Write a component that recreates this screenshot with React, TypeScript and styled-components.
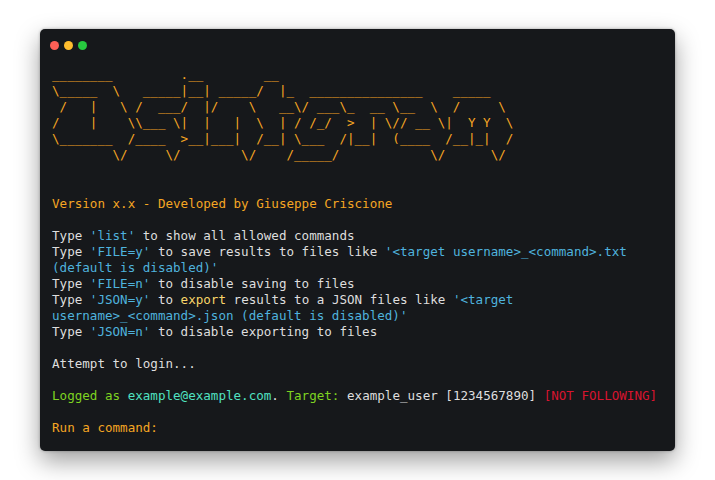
import React from 'react';
import styled, { createGlobalStyle } from 'styled-components';

const colors = {
  orange: '#f5a623',
  blue: '#4fb3de',
  green: '#7ed321',
  teal: '#50e3c2',
  red: '#d8142f',
  yellow: '#f8d568',
  plain: '#dedede',
};

type Tone = keyof typeof colors;

const GlobalStyle = createGlobalStyle`
  html, body {
    margin: 0;
    padding: 0;
    background-color: #fff;
  }
`;

const Page = styled.div`
  width: 715px;
  height: 480px;
  box-sizing: border-box;
  padding: 29px 40px;
  overflow: hidden;
`;

const Terminal = styled.div`
  width: 635px;
  height: 422px;
  box-sizing: border-box;
  background-color: #16181b;
  border-radius: 5px;
  box-shadow: 0 10px 24px rgba(0, 0, 0, 0.38), 0 0 3px rgba(0, 0, 0, 0.3);
  padding: 12px;
`;

const TitleBar = styled.div`
  display: flex;
  gap: 5px;
  height: 9px;
  margin: 0 0 17px -2px;
`;

const Dot = styled.span<{ $color: string }>`
  width: 9px;
  height: 9px;
  border-radius: 50%;
  background-color: ${props => props.$color};
`;

const Output = styled.div`
  font-family: "DejaVu Sans Mono", "Liberation Mono", monospace;
  font-size: 12.57px;
  line-height: 16px;
  white-space: pre-wrap;
`;

const Banner = styled.div`
  margin-bottom: 1px;
`;

const Line = styled.div<{ $tone?: Tone }>`
  min-height: 16px;
  color: ${props => colors[props.$tone || 'plain']};
`;

const Tint = styled.span<{ $tone: Tone }>`
  color: ${props => colors[props.$tone]};
`;

const banner = [
  '________         .__        __',
  '\\_____  \\   _____|__| _____/  |_  _______________    _____',
  ' /   |   \\ /  ___/  |/    \\   __\\/ ___\\_  __ \\__  \\  /     \\',
  '/    |    \\\\___ \\|  |   |  \\  | / /_/  >  | \\// __ \\|  Y Y  \\',
  '\\_______  /____  >__|___|  /__| \\___  /|__|  (____  /__|_|  /',
  '        \\/     \\/        \\/    /_____/            \\/      \\/',
];

const App: React.FC = () => {
  return (
    <Page>
      <GlobalStyle />
      <Terminal>
        <TitleBar>
          <Dot $color="#ff5f56" />
          <Dot $color="#ffbd2e" />
          <Dot $color="#27c93f" />
        </TitleBar>
        <Output>
          <Banner>
            {banner.map(row => (
              <Line key={row} $tone="orange">{row}</Line>
            ))}
          </Banner>
          <Line />
          <Line />
          <Line $tone="orange">Version x.x - Developed by Giuseppe Criscione</Line>
          <Line />
          <Line>Type <Tint $tone="blue">'list'</Tint> to show all allowed commands</Line>
          <Line>
            Type <Tint $tone="blue">'FILE=y'</Tint> to save results to files like{' '}
            <Tint $tone="blue">'&lt;target username&gt;_&lt;command&gt;.txt (default is disabled)'</Tint>
          </Line>
          <Line>Type <Tint $tone="blue">'FILE=n'</Tint> to disable saving to files</Line>
          <Line>
            Type <Tint $tone="blue">'JSON=y'</Tint> to <Tint $tone="yellow">export</Tint> results to a JSON files like{' '}
            <Tint $tone="blue">'&lt;target username&gt;_&lt;command&gt;.json (default is disabled)'</Tint>
          </Line>
          <Line>Type <Tint $tone="blue">'JSON=n'</Tint> to disable exporting to files</Line>
          <Line />
          <Line>Attempt to login...</Line>
          <Line />
          <Line>
            <Tint $tone="green">Logged as </Tint>
            <Tint $tone="teal">example@example.com</Tint>. <Tint $tone="green">Target: </Tint>
            example_user [1234567890] <Tint $tone="red">[NOT FOLLOWING]</Tint>
          </Line>
          <Line />
          <Line $tone="orange">Run a command:</Line>
        </Output>
      </Terminal>
    </Page>
  );
};

export default App;
